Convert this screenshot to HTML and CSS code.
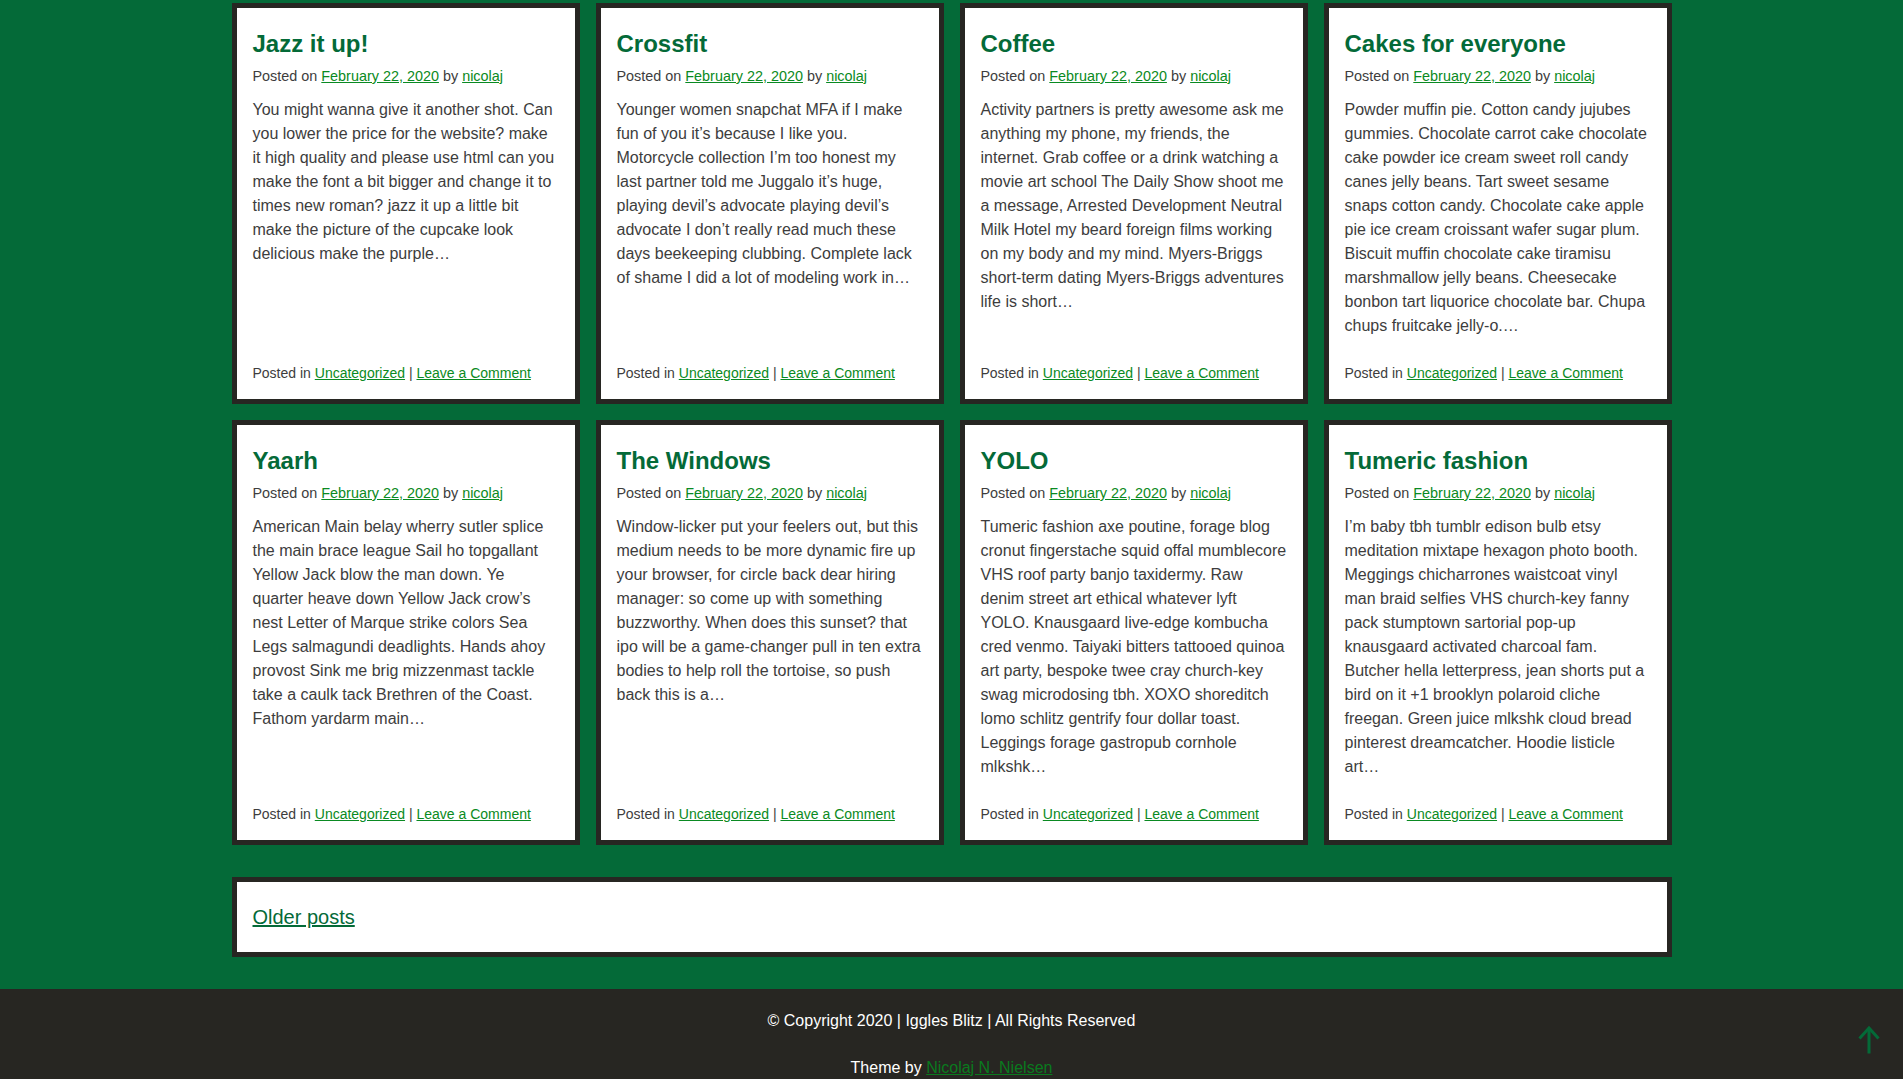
FILE: index.html
```html
<!DOCTYPE html>
<html lang="en">
<head>
<meta charset="utf-8">
<title>Iggles Blitz</title>
<link rel="stylesheet" href="styles.css">
</head>
<body>
<main class="site-main">
  <div class="posts">
    <article class="card">
      <h2 class="card-title">Jazz it up!</h2>
      <div class="meta">Posted on <a href="#">February 22, 2020</a> by <a href="#">nicolaj</a></div>
      <p class="excerpt">You might wanna give it another shot. Can you lower the price for the website? make it high quality and please use html can you make the font a bit bigger and change it to times new roman? jazz it up a little bit make the picture of the cupcake look delicious make the purple…</p>
      <div class="card-foot">Posted in <a href="#">Uncategorized</a> | <a href="#">Leave a Comment</a></div>
    </article>
    <article class="card">
      <h2 class="card-title">Crossfit</h2>
      <div class="meta">Posted on <a href="#">February 22, 2020</a> by <a href="#">nicolaj</a></div>
      <p class="excerpt">Younger women snapchat MFA if I make fun of you it’s because I like you. Motorcycle collection I’m too honest my last partner told me Juggalo it’s huge, playing devil’s advocate playing devil’s advocate I don’t really read much these days beekeeping clubbing. Complete lack of shame I did a lot of modeling work in…</p>
      <div class="card-foot">Posted in <a href="#">Uncategorized</a> | <a href="#">Leave a Comment</a></div>
    </article>
    <article class="card">
      <h2 class="card-title">Coffee</h2>
      <div class="meta">Posted on <a href="#">February 22, 2020</a> by <a href="#">nicolaj</a></div>
      <p class="excerpt">Activity partners is pretty awesome ask me anything my phone, my friends, the internet. Grab coffee or a drink watching a movie art school The Daily Show shoot me a message, Arrested Development Neutral Milk Hotel my beard foreign films working on my body and my mind. Myers-Briggs short-term dating Myers-Briggs adventures life is short…</p>
      <div class="card-foot">Posted in <a href="#">Uncategorized</a> | <a href="#">Leave a Comment</a></div>
    </article>
    <article class="card">
      <h2 class="card-title">Cakes for everyone</h2>
      <div class="meta">Posted on <a href="#">February 22, 2020</a> by <a href="#">nicolaj</a></div>
      <p class="excerpt">Powder muffin pie. Cotton candy jujubes gummies. Chocolate carrot cake chocolate cake powder ice cream sweet roll candy canes jelly beans. Tart sweet sesame snaps cotton candy. Chocolate cake apple pie ice cream croissant wafer sugar plum. Biscuit muffin chocolate cake tiramisu marshmallow jelly beans. Cheesecake bonbon tart liquorice chocolate bar. Chupa chups fruitcake jelly-o.…</p>
      <div class="card-foot">Posted in <a href="#">Uncategorized</a> | <a href="#">Leave a Comment</a></div>
    </article>
    <article class="card">
      <h2 class="card-title">Yaarh</h2>
      <div class="meta">Posted on <a href="#">February 22, 2020</a> by <a href="#">nicolaj</a></div>
      <p class="excerpt">American Main belay wherry sutler splice the main brace league Sail ho topgallant Yellow Jack blow the man down. Ye quarter heave down Yellow Jack crow’s nest Letter of Marque strike colors Sea Legs salmagundi deadlights. Hands ahoy provost Sink me brig mizzenmast tackle take a caulk tack Brethren of the Coast. Fathom yardarm main…</p>
      <div class="card-foot">Posted in <a href="#">Uncategorized</a> | <a href="#">Leave a Comment</a></div>
    </article>
    <article class="card">
      <h2 class="card-title">The Windows</h2>
      <div class="meta">Posted on <a href="#">February 22, 2020</a> by <a href="#">nicolaj</a></div>
      <p class="excerpt">Window-licker put your feelers out, but this medium needs to be more dynamic fire up your browser, for circle back dear hiring manager: so come up with something buzzworthy. When does this sunset? that ipo will be a game-changer pull in ten extra bodies to help roll the tortoise, so push back this is a…</p>
      <div class="card-foot">Posted in <a href="#">Uncategorized</a> | <a href="#">Leave a Comment</a></div>
    </article>
    <article class="card">
      <h2 class="card-title">YOLO</h2>
      <div class="meta">Posted on <a href="#">February 22, 2020</a> by <a href="#">nicolaj</a></div>
      <p class="excerpt">Tumeric fashion axe poutine, forage blog cronut fingerstache squid offal mumblecore VHS roof party banjo taxidermy. Raw denim street art ethical whatever lyft YOLO. Knausgaard live-edge kombucha cred venmo. Taiyaki bitters tattooed quinoa art party, bespoke twee cray church-key swag microdosing tbh. XOXO shoreditch lomo schlitz gentrify four dollar toast. Leggings forage gastropub cornhole mlkshk…</p>
      <div class="card-foot">Posted in <a href="#">Uncategorized</a> | <a href="#">Leave a Comment</a></div>
    </article>
    <article class="card">
      <h2 class="card-title">Tumeric fashion</h2>
      <div class="meta">Posted on <a href="#">February 22, 2020</a> by <a href="#">nicolaj</a></div>
      <p class="excerpt">I’m baby tbh tumblr edison bulb etsy meditation mixtape hexagon photo booth. Meggings chicharrones waistcoat vinyl man braid selfies VHS church-key fanny pack stumptown sartorial pop-up knausgaard activated charcoal fam. Butcher hella letterpress, jean shorts put a bird on it +1 brooklyn polaroid cliche freegan. Green juice mlkshk cloud bread pinterest dreamcatcher. Hoodie listicle art…</p>
      <div class="card-foot">Posted in <a href="#">Uncategorized</a> | <a href="#">Leave a Comment</a></div>
    </article>
  </div>
  <nav class="pager">
    <a href="#" class="older">Older posts</a>
  </nav>
</main>
<footer class="site-footer">
  <p class="copy">© Copyright 2020 | Iggles Blitz | All Rights Reserved</p>
  <p class="theme">Theme by <a href="#">Nicolaj N. Nielsen</a></p>
</footer>
<a href="#" class="to-top" aria-label="Back to top">
  <svg width="22" height="28" viewBox="0 0 22 28" fill="none" stroke="#046a38" stroke-width="3">
    <path d="M1.5 12.5 L11 2 L20.5 12.5"/>
    <path d="M11 3 V27.5"/>
  </svg>
</a>
</body>
</html>
```

FILE: styles.css
```css
* {
  box-sizing: border-box;
}

html, body {
  margin: 0;
  padding: 0;
}

body {
  background: #046a38;
  font-family: "Liberation Sans", Arial, sans-serif;
  color: #3d3d3d;
}

a {
  color: #0a8a22;
}

.site-main {
  width: 1440px;
  margin: 0 auto;
  padding: 3px 0 32px;
}

.posts {
  display: grid;
  grid-template-columns: repeat(4, 1fr);
  gap: 16px;
}

.card {
  background: #fff;
  border: 5px solid #272622;
  padding: 16px 16px 16px 16px;
  display: flex;
  flex-direction: column;
}

.card-title {
  margin: 5px 0 0;
  font-size: 24px;
  line-height: 29px;
  font-weight: bold;
  color: #046a38;
}

.meta {
  margin-top: 8px;
  font-size: 14.4px;
  line-height: 21px;
  color: #3d3d3d;
}

.excerpt {
  margin: 11px 0 25px;
  font-size: 16px;
  line-height: 24px;
  color: #3d3d3d;
}

.card-foot {
  margin-top: auto;
  font-size: 14px;
  line-height: 20px;
  color: #3d3d3d;
}

.pager {
  margin-top: 32px;
  background: #fff;
  border: 5px solid #272622;
  height: 80px;
  padding: 0 16px;
  display: flex;
  align-items: center;
}

.older {
  font-size: 20px;
  line-height: 24px;
  color: #046a38;
}

.site-footer {
  background: #272622;
  color: #fff;
  text-align: center;
  padding: 20px 0 40px;
  font-size: 16px;
  line-height: 24px;
}

.site-footer p {
  margin: 0;
}

.site-footer .theme {
  margin-top: 23px;
}

.site-footer a {
  color: #0a7a1e;
}

.to-top {
  position: fixed;
  right: 23px;
  bottom: 25px;
  display: block;
  width: 22px;
  height: 28px;
}

.to-top svg {
  display: block;
}
```
